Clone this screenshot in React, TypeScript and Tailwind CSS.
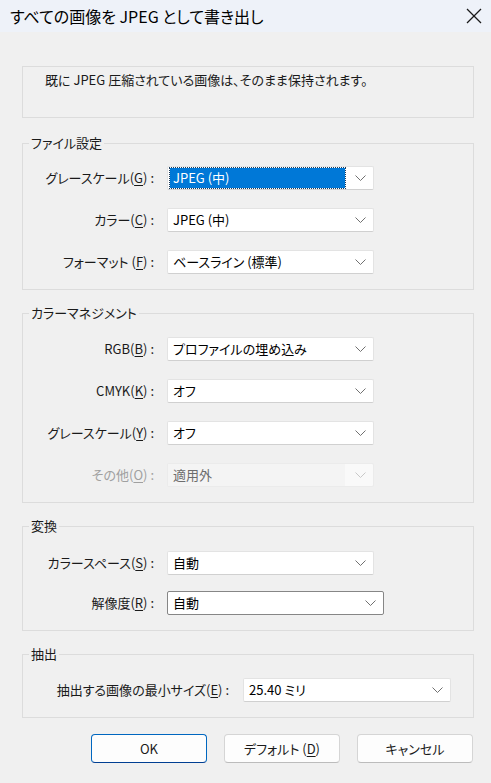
import React from "react";

const font = "[font-family:'Noto_Sans_CJK_JP','Noto_Sans',sans-serif] [font-feature-settings:'palt']";

function Chevron({ disabled = false }: { disabled?: boolean }) {
  return (
    <svg width="11" height="6" viewBox="0 0 11 6" className="shrink-0">
      <polyline
        points="0.5,0.5 5.5,5.5 10.5,0.5"
        fill="none"
        stroke={disabled ? "#c8c8c8" : "#707070"}
        strokeWidth="1"
      />
    </svg>
  );
}

type DropProps = {
  value: string;
  width?: string;
  focused?: boolean;
  disabled?: boolean;
  dark?: boolean;
};

function Dropdown({ value, width = "w-[207px]", focused, disabled, dark }: DropProps) {
  if (disabled) {
    return (
      <div className={`${width} h-6 flex items-stretch border border-[#ebebeb] bg-[#f9f9f9] rounded-[2px]`}>
        <div className="flex-1 flex items-center pl-[5px] bg-[#f4f4f4] text-[#6d6d6d]">{value}</div>
        <div className="w-[28px] flex items-center justify-center pl-[2px]">
          <Chevron disabled />
        </div>
      </div>
    );
  }
  return (
    <div
      className={`${width} h-6 flex items-center bg-white border rounded-[2px] ${
        dark ? "border-[#868686]" : "border-[#e3e3e3] border-b-[#d0d0d0]"
      }`}
    >
      {focused ? (
        <div className="flex-1 ml-[2px] h-[20px] flex items-center pl-[3px] bg-[#0078d7] text-white outline-1 outline-dotted outline-[#1d3c5c]">
          {value}
        </div>
      ) : (
        <div className="flex-1 pl-[5px] text-black">{value}</div>
      )}
      <div className="w-[28px] flex items-center justify-center pl-[2px]">
        <Chevron />
      </div>
    </div>
  );
}

function Label({ text, mn, tail = "", gray, width = "w-[131px]" }: { text: string; mn: string; tail?: string; gray?: boolean; width?: string }) {
  return (
    <div className={`${width} shrink-0 text-right whitespace-nowrap ${gray ? "text-[#a0a0a0]" : "text-[#1a1a1a]"}`}>
      {text}(<span className="underline underline-offset-2">{mn}</span>){tail} :
    </div>
  );
}

function Group({ title, children, pt = "pt-[22px]", gap = "gap-[18px]", first }: { title: string; children: React.ReactNode; pt?: string; gap?: string; first?: boolean }) {
  return (
    <div className={`relative border border-[#dcdcdc] ${first ? "mt-[25px]" : "mt-[23px]"} ${pt} pb-[15px] flex flex-col ${gap}`}>
      <span className="absolute -top-[10px] left-[6px] px-[2px] bg-[#f0f0f0] leading-[18px] text-[#1a1a1a]">{title}</span>
      {children}
    </div>
  );
}

export default function App() {
  return (
    <div className={`w-[491px] h-[783px] bg-[#f0f0f0] text-[13px] leading-[18px] ${font} overflow-hidden`}>
      {/* Title bar */}
      <div className="h-8 bg-[#eef2f9] flex items-center justify-between pl-[10px] pr-[9px]">
        <span className="text-[16px] text-black">すべての画像を JPEG として書き出し</span>
        <svg width="16" height="16" viewBox="0 0 16 16">
          <line x1="1" y1="1" x2="15" y2="15" stroke="#1a1a1a" strokeWidth="1.2" />
          <line x1="15" y1="1" x2="1" y2="15" stroke="#1a1a1a" strokeWidth="1.2" />
        </svg>
      </div>

      <div className="ml-[22px] mr-[17px]">
        {/* Info */}
        <div className="mt-[34px] h-[52px] border border-[#dcdcdc] pl-[22px] pt-[4px] text-[#1a1a1a]">
          既に JPEG 圧縮されている画像は、そのまま保持されます。
        </div>

        <Group title="ファイル設定" first>
          <div className="flex items-center gap-[13px]">
            <Label text="グレースケール" mn="G" />
            <Dropdown value="JPEG (中)" focused />
          </div>
          <div className="flex items-center gap-[13px]">
            <Label text="カラー" mn="C" />
            <Dropdown value="JPEG (中)" />
          </div>
          <div className="flex items-center gap-[13px]">
            <Label text="フォーマット " mn="F" />
            <Dropdown value="ベースライン (標準)" />
          </div>
        </Group>

        <Group title="カラーマネジメント" pt="pt-[23px]">
          <div className="flex items-center gap-[13px]">
            <Label text="RGB" mn="B" />
            <Dropdown value="プロファイルの埋め込み" />
          </div>
          <div className="flex items-center gap-[13px]">
            <Label text="CMYK" mn="K" />
            <Dropdown value="オフ" />
          </div>
          <div className="flex items-center gap-[13px]">
            <Label text="グレースケール" mn="Y" />
            <Dropdown value="オフ" />
          </div>
          <div className="flex items-center gap-[13px]">
            <Label text="その他" mn="O" gray />
            <Dropdown value="適用外" disabled />
          </div>
        </Group>

        <Group title="変換" pt="pt-[24px]" gap="gap-[16px]">
          <div className="flex items-center gap-[13px]">
            <Label text="カラースペース" mn="S" />
            <Dropdown value="自動" />
          </div>
          <div className="flex items-center gap-[13px]">
            <Label text="解像度" mn="R" />
            <Dropdown value="自動" width="w-[217px]" dark />
          </div>
        </Group>

        <Group title="抽出" pt="pt-[23px]">
          <div className="flex items-center gap-[14px]">
            <Label text="抽出する画像の最小サイズ" mn="E" width="w-[206px]" />
            <Dropdown value="25.40 ミリ" width="w-[208px]" />
          </div>
        </Group>

        {/* Buttons */}
        <div className="mt-4 flex justify-end gap-[17px] pr-px">
          <button className="w-[116px] h-[29px] rounded-[4px] bg-[#fdfdfd] border border-[#0067c0] border-b-[#003e92] text-[#1a1a1a]">
            OK
          </button>
          <button className="w-[116px] h-[29px] rounded-[4px] bg-[#fdfdfd] border border-[#d5d5d5] border-b-[#bcbcbc] text-[#1a1a1a]">
            デフォルト (<span className="underline underline-offset-2">D</span>)
          </button>
          <button className="w-[116px] h-[29px] rounded-[4px] bg-[#fdfdfd] border border-[#d5d5d5] border-b-[#bcbcbc] text-[#1a1a1a]">
            キャンセル
          </button>
        </div>
      </div>
    </div>
  );
}
